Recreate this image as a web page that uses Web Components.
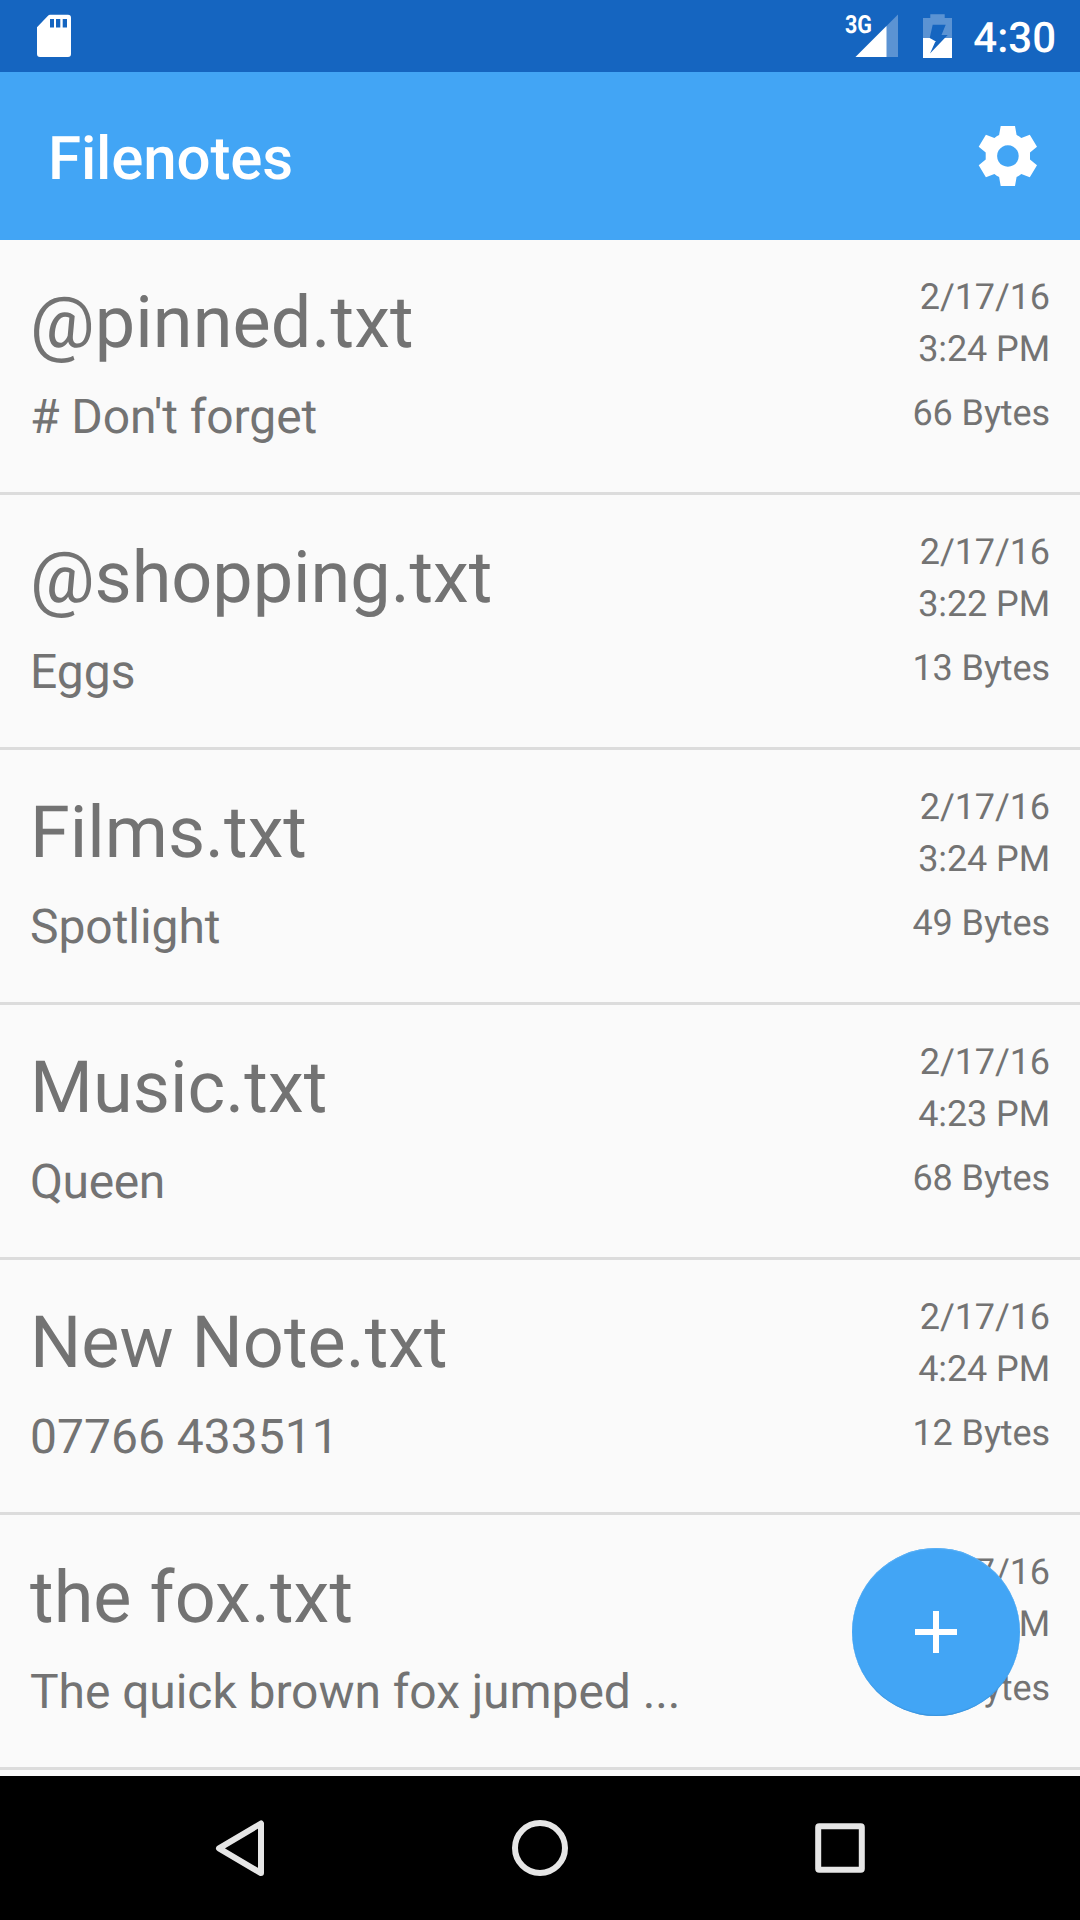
<!DOCTYPE html>
<html lang="en">
<head>
<meta charset="utf-8">
<title>Filenotes</title>
<style>
html,body{margin:0;padding:0}
body{width:1080px;height:1920px;overflow:hidden;background:#fafafa;font-family:Roboto,"Liberation Sans",sans-serif;text-rendering:geometricPrecision}
</style>
</head>
<body>
<notes-app></notes-app>
<script>
class Base extends HTMLElement{
  constructor(){super();this.attachShadow({mode:'open'});}
  connectedCallback(){this.shadowRoot.innerHTML=this.render();}
}
customElements.define('status-bar',class extends Base{render(){return `
<style>
:host{display:flex;box-sizing:border-box;height:72px;background:#1565c0;color:#fff;align-items:flex-start;padding:0 24px 0 36px}
svg{display:block;flex:none}
.gap{flex:1}
.battery{margin-left:3px}
.clock{font-weight:500;font-size:42px;line-height:50px;width:84px;text-align:right;margin:14px 0 0 14px}
</style>
<svg width="36" height="72" viewBox="0 0 36 72"><path fill="#fff" fill-rule="evenodd" d="M14 14.7H32a3 3 0 0 1 3 3V54a3 3 0 0 1-3 3H4a3 3 0 0 1-3-3V27.3L12 15.8Q13 14.7 14 14.7ZM14 19v8.6h4V19ZM20 19v8.6h4.3V19ZM26.7 19v8.6H31V19Z"/></svg>
<div class="gap"></div>
<svg width="56" height="72" viewBox="0 0 56 72"><path fill="#fff" fill-opacity=".3" d="M53 14.5V57H10.500Z"/><path fill="#fff" d="M41.500 26V57H10.500Z"/><text x="0" y="33.3" font-size="25" font-weight="700" fill="#fff" textLength="27" lengthAdjust="spacingAndGlyphs">3G</text></svg>
<svg class="battery" width="54" height="72" viewBox="0 0 54 72"><path fill="#fff" fill-opacity=".3" d="M26.300 14.200h14.400V18H48v20H19V18h7.300Z"/><path fill="#fff" d="M19 38H48V58H19Z"/><path fill="#1565c0" d="M28.700 24.700H41.700L37.500 35H43.700L26 53.500L31.500 41.300H25.700L25.700 38Z"/><path fill="#fff" d="M25 38H25.700L31.500 41.300V42H25Z"/></svg>
<div class="clock">4:30</div>`}});
customElements.define('app-toolbar',class extends Base{render(){return `
<style>
:host{display:flex;box-sizing:border-box;height:168px;background:#42a5f5;color:#fff;align-items:center;justify-content:space-between;padding:0 36px 0 48px}
.t{font-weight:500;font-size:60px;line-height:70px;letter-spacing:-.12px;margin-top:6px}
svg{display:block}
</style>
<div class="t"><slot></slot></div>
<svg width="72" height="72" viewBox="0 0 72 72"><path fill="#fff" fill-rule="evenodd" d="M28.700 6H43L44.600 15Q47 16 49.300 17.900L57.800 14.700L65 26.800L58 32.500V39.500L65 45.200L57.800 57.300L49.300 54.100Q47 56 44.600 57L43 66H28.700L27.100 57Q24.700 56 22.400 54.100L13.900 57.300L6.700 45.200L13.700 39.500V32.500L6.700 26.800L13.900 14.700L22.400 17.900Q24.700 16 27.100 15ZM35.900 25.200a10.800 10.800 0 1 0 .01 0Z"/></svg>`}});
customElements.define('note-row',class extends Base{render(){return `
<style>
:host{display:flex;box-sizing:border-box;height:255px;border-bottom:3px solid #dcdcdc;color:#737373;justify-content:space-between;padding:0 30px;white-space:nowrap}
.l{padding-top:41px}
.n{font-size:72px;line-height:84px;letter-spacing:var(--name-spacing,0)}
.p{font-size:48px;line-height:56px;margin-top:24px;letter-spacing:var(--preview-spacing,0)}
.r{padding-top:31px;text-align:right;font-size:36px;line-height:52px;letter-spacing:-.1px}
.s{margin-top:12px}
</style>
<div class="l"><div class="n"><slot name="name"></slot></div><div class="p"><slot name="preview"></slot></div></div>
<div class="r"><div><slot name="date"></slot></div><div><slot name="time"></slot></div><div class="s"><slot name="size"></slot></div></div>`}});
customElements.define('add-button',class extends Base{render(){return `
<style>
:host{position:absolute;right:60px;bottom:60px;width:168px;height:168px;border-radius:50%;background:#42a5f5;display:flex;align-items:center;justify-content:center;box-shadow:inset 0 -2px 1px -1px #3a93dc,inset 0 1px 1px #5bb0f5}
svg{display:block}
</style>
<svg width="72" height="72" viewBox="0 0 72 72"><path fill="#fff" d="M33 15h6v18h18v6H39v18h-6V39H15v-6h18Z"/></svg>`}});
customElements.define('nav-bar',class extends Base{render(){return `
<style>
:host{display:flex;height:144px;background:#000;justify-content:center;align-items:center;gap:210px}
svg{display:block}
path,circle,rect{fill:none;stroke:#e6e6e6;stroke-width:6;stroke-linejoin:round}
</style>
<svg width="90" height="90" viewBox="0 0 90 90"><path d="M24 45.300L66 20.500V70.100Z"/></svg>
<svg width="90" height="90" viewBox="0 0 90 90"><circle cx="45" cy="45" r="25"/></svg>
<svg width="90" height="90" viewBox="0 0 90 90"><rect x="23.200" y="23.200" width="43.600" height="43.600" rx="1"/></svg>`}});
const notes=[
['@pinned.txt','# Don\'t forget','3:24 PM','66 Bytes',.08,-.09],
['@shopping.txt','Eggs','3:22 PM','13 Bytes',-.05,0],
['Films.txt','Spotlight','3:24 PM','49 Bytes',0,-.05],
['Music.txt','Queen','4:23 PM','68 Bytes',.08,-.4],
['New Note.txt','07766 433511','4:24 PM','12 Bytes',0,0],
['the fox.txt','The quick brown fox jumped ...','4:24 PM','45 Bytes',.08,-.07]];
customElements.define('notes-app',class extends Base{render(){return `
<style>
:host{display:flex;flex-direction:column;width:1080px;height:1920px}
main{position:relative;height:1536px;overflow:hidden}
</style>
<status-bar></status-bar><app-toolbar>Filenotes</app-toolbar>
<main>${notes.map(n=>`<note-row style="--name-spacing:${n[4]}px;--preview-spacing:${n[5]}px"><span slot="name">${n[0]}</span><span slot="preview">${n[1]}</span><span slot="date">2/17/16</span><span slot="time">${n[2]}</span><span slot="size">${n[3]}</span></note-row>`).join('')}<add-button></add-button></main>
<nav-bar></nav-bar>`}});
</script>
</body>
</html>
